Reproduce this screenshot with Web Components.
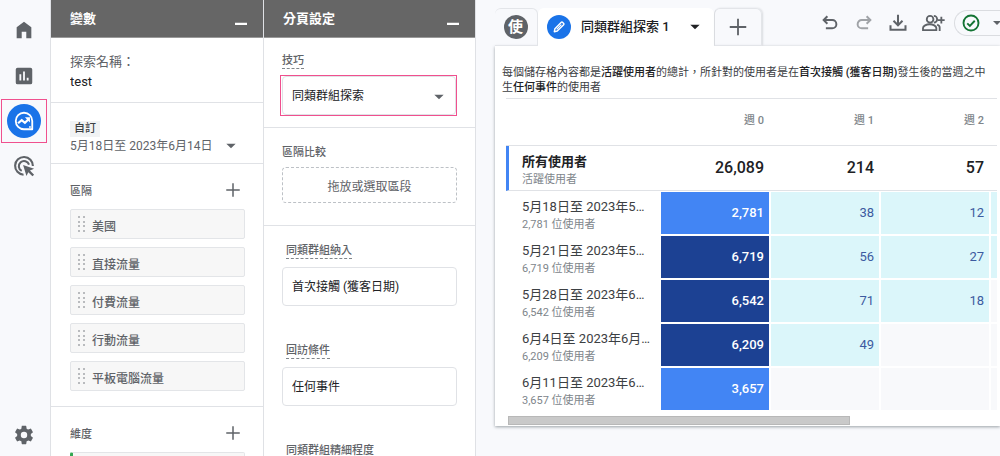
<!DOCTYPE html>
<html lang="zh-Hant">
<head>
<meta charset="utf-8">
<meta name="viewport" content="width=device-width, initial-scale=1">
<title>同類群組探索</title>
<style>
  body { margin: 0; font-family: Roboto, "Noto Sans CJK TC", sans-serif; font-size: 12px; color: #202124; background: #f8f9fc; }
</style>
</head>
<body>
<exploration-app></exploration-app>

<script>
const BASE = `
  * { box-sizing: border-box; }
  :host { display: block; }
  :host([hidden]) { display: none; }
  svg { display: block; fill: currentColor; }
  button, select, input { font: inherit; color: inherit; margin: 0; padding: 0; border: 0; background: none; }
  button, select { cursor: pointer; }
`;

function define(name, render) {
  customElements.define(name, class extends HTMLElement {
    connectedCallback() {
      if (this.shadowRoot) return;
      const template = document.createElement('template');
      template.innerHTML = render(this);
      this.attachShadow({ mode: 'open' }).append(template.content.cloneNode(true));
    }
  });
}

/* Icons, each on a 24 x 24 grid */
const ICONS = {
  home: '<path d="M4 21V9l8-6 8 6v12h-5.500v-7h-5v7z"/>',
  chart: '<path fill-rule="evenodd" d="M5 3h14a2 2 0 0 1 2 2v14a2 2 0 0 1-2 2H5a2 2 0 0 1-2-2V5a2 2 0 0 1 2-2zM7 10v7h2v-7zM11 7v10h2V7zM15 14v3h2v-3z"/>',
  explore: '<path fill="none" stroke="currentColor" stroke-width="2" stroke-linejoin="round" d="M12 3a9 9 0 1 0 0 18h9v-9a9 9 0 0 0-9-9z"/><path fill="none" stroke="currentColor" stroke-width="2.400" d="M5.500 14.500l4-3.500 3.500 3 4-4"/><path d="M13 8h5.500v5.500z"/><circle cx="18.500" cy="18.500" r="1"/>',
  target: '<g fill="none" stroke="currentColor" stroke-width="2.300"><path d="M11.500 21.500A9.700 9.700 0 1 1 21.700 12"/><path d="M9.500 17.300A5.700 5.700 0 1 1 17.500 10.500"/></g><path d="M11 11l12 4-4.500 2 4.500 4.500-1.800 1.800-4.500-4.500-2 4.200z"/>',
  gear: '<path d="M19.430 12.980c.04-.32.07-.64.07-.98s-.03-.66-.07-.98l2.110-1.650c.19-.15.24-.42.12-.64l-2-3.460c-.12-.22-.39-.3-.61-.22l-2.490 1c-.52-.4-1.080-.73-1.690-.98l-.38-2.650A.49.49 0 0 0 14 2h-4c-.25 0-.46.18-.49.42l-.38 2.650c-.61.25-1.170.59-1.690.98l-2.490-1c-.23-.09-.49 0-.61.22l-2 3.460c-.13.22-.07.49.12.64l2.110 1.650c-.04.32-.07.65-.07.98s.03.66.07.98l-2.110 1.650c-.19.15-.24.42-.12.64l2 3.460c.12.22.39.3.61.22l2.490-1c.52.4 1.080.73 1.690.98l.38 2.650c.03.24.24.42.49.42h4c.25 0 .46-.18.49-.42l.38-2.650c.61-.25 1.170-.59 1.690-.98l2.490 1c.23.09.49 0 .61-.22l2-3.460c.12-.22.07-.49-.12-.64l-2.110-1.650zM12 15.500A3.500 3.500 0 1 1 12 8.500a3.500 3.500 0 0 1 0 7z"/>',
  plus: '<path d="M11 3h2v8h8v2h-8v8h-2v-8H3v-2h8z"/>',
  minus: '<path d="M4 17h16v3H4z"/>',
  caret: '<path d="M4 8h16l-8 8z"/>',
  undo: '<path fill="none" stroke="currentColor" stroke-width="2.600" d="M8.500 3L3.500 8l5 5M3.500 8H15a5.500 5.500 0 0 1 0 11H6.500"/>',
  redo: '<path fill="none" stroke="currentColor" stroke-width="2.600" d="M15.500 3l5 5-5 5M20.500 8H9a5.500 5.500 0 0 0 0 11h8.500"/>',
  download: '<path fill="none" stroke="currentColor" stroke-width="2.700" d="M12 1v14M6 9l6 6 6-6M2 15v6h20v-6"/>',
  share: '<g fill="none" stroke="currentColor" stroke-width="2.200"><circle cx="8.500" cy="7.500" r="4"/><path d="M0 20.500V18c0-2.500 4-4.500 8-4.500s8 2 8 4.500v2.500zM13 3.500a4 4 0 0 1 0 8M17 14c2 .700 3 2 3 3.500V21.500M22 4.500v8M18 8.500h8"/></g>',
  check: '<g fill="none" stroke="currentColor" stroke-width="2.500"><circle cx="12" cy="12" r="10"/><path d="M7 12.500l3.500 3.500L17 9"/></g>',
  pencil: '<path fill="none" stroke="currentColor" stroke-width="2.500" stroke-linejoin="round" d="M4 20l1-5L16 4q1-1 2 0l2 2q1 1 0 2L9 19z"/><path fill="none" stroke="currentColor" stroke-width="2" d="M8 16l8-8"/>'
};
define('ui-icon', el => `<style>${BASE}
  svg { width: var(--size, 18px); height: var(--size, 18px); overflow: visible; }
</style><svg viewBox="0 0 24 24" aria-hidden="true">${ICONS[el.getAttribute('name')]}</svg>`);

define('nav-rail', () => `<style>${BASE}
  :host { color: #5f6368; }
  nav { height: 100%; display: flex; flex-direction: column; align-items: center; padding: 7px 2px 0 0; }
  a { display: grid; place-items: center; width: 46px; height: 46px; color: inherit; --size: 22px; }
  a.current { height: 44px; border: 1px solid #f0508e; }
  a.current span { display: grid; place-items: center; width: 34px; height: 34px; border-radius: 50%; background: #1a73e8; color: #fff; }
  a.settings { margin-top: auto; height: 42px; }
</style>
<nav aria-label="主選單">
  <a href="#home" aria-label="首頁"><ui-icon name="home"></ui-icon></a>
  <a href="#reports" aria-label="報表"><ui-icon name="chart"></ui-icon></a>
  <a href="#explore" class="current" aria-label="探索"><span><ui-icon name="explore"></ui-icon></span></a>
  <a href="#advertising" aria-label="廣告"><ui-icon name="target"></ui-icon></a>
  <a href="#admin" class="settings" aria-label="管理"><ui-icon name="gear"></ui-icon></a>
</nav>`);

define('side-panel', el => `<style>${BASE}
  :host { background: #fff; border-left: 1px solid #dfe1e5; min-width: 0; }
  header { display: flex; justify-content: space-between; align-items: center; height: 38px; padding: 0 13px 0 19px; background: #666; border-bottom: 1px solid #999; color: #fff; }
  h2 { margin: 0; font-size: 13px; line-height: 20px; font-weight: 700; }
</style>
<header><h2>${el.getAttribute('heading')}</h2><button aria-label="最小化"><ui-icon name="minus"></ui-icon></button></header>
<slot></slot>`);

define('panel-section', () => `<style>${BASE}
  :host { padding: 14px 18px 10px 19px; border-bottom: 1px solid #e0e2e6; }
</style><slot></slot>`);

define('name-field', () => `<style>${BASE}
  label { display: block; font-size: 13px; line-height: 20px; color: #5f6368; }
  input { display: block; width: 100%; height: 20px; font-size: 13px; line-height: 20px; }
</style><label for="name">探索名稱：</label><input id="name" value="test">`);

define('date-range', () => `<style>${BASE}
  :host { padding-top: 4px; }
  button { display: block; width: 100%; text-align: left; color: #5f6368; }
  .chip { display: inline-block; padding: 0 4px; background: #f1f3f4; color: #3c4043; font-size: 11px; line-height: 16px; font-weight: 500; }
  .range { display: flex; gap: 12px; align-items: center; line-height: 18px; --size: 14px; white-space: nowrap; }
</style><button><span class="chip">自訂</span><span class="range">5月18日至 2023年6月14日<ui-icon name="caret"></ui-icon></span></button>`);

define('item-group', el => `<style>${BASE}
  header { display: flex; justify-content: space-between; align-items: center; height: 24px; padding-right: 3px; color: #5f6368; }
  h3 { margin: 0; padding-top: 3px; font-size: 11px; line-height: 16px; font-weight: 500; }
  .items { display: grid; gap: 8px; padding-top: 7px; }
</style>
<header><h3>${el.getAttribute('heading')}</h3><button aria-label="新增${el.getAttribute('heading')}"><ui-icon name="plus"></ui-icon></button></header>
<div class="items"><slot></slot></div>`);

define('drag-item', () => `<style>${BASE}
  :host { display: flex; align-items: center; gap: 7px; height: 30px; padding: 6px 7px 0; border: 1px solid #e3e5e8; border-radius: 2px; background: #f7f7f7; color: #5f6368; font-weight: 500; line-height: 18px; }
  :host([kind="dimension"]) { border-left: 3px solid #34a853; }
  svg { width: 7px; height: 16px; color: #b9bbbe; margin-bottom: 6px; }
</style>
<svg viewBox="0 0 7 16" aria-hidden="true"><path d="M0 0h2v2H0zM5 0h2v2H5zM0 5h2v2H0zM5 5h2v2H5zM0 9h2v2H0zM5 9h2v2H5zM0 14h2v2H0zM5 14h2v2H5z"/></svg><span><slot></slot></span>`);

define('select-field', el => `<style>${BASE}
  label { display: inline-block; height: 17px; font-size: 11px; line-height: 18px; color: #5f6368; font-weight: 500; border-bottom: 1px dashed #80868b; vertical-align: top; }
  :host([indent]) label { margin-left: 4px; }
  .box { position: relative; display: block; margin-top: 8px; }
  select { display: block; appearance: none; width: 100%; height: 39px; padding: 0 9px; border: 1px solid #e0e2e6; border-radius: 4px; background: #fff; }
  ui-icon { position: absolute; right: 10px; top: 14px; --size: 14px; color: #5f6368; pointer-events: none; }
  :host([marked]) .box { margin: 6px 0 0 -2px; border: 1px solid #f0508e; padding-left: 1px; }
</style>
<label for="field">${el.getAttribute('label')}</label>
<div class="box"><select id="field"><option>${el.getAttribute('value')}</option></select>${el.hasAttribute('marked') ? '<ui-icon name="caret"></ui-icon>' : ''}</div>`);

define('drop-zone', el => `<style>${BASE}
  h3 { margin: 0 0 6px; font-size: 11px; line-height: 17px; font-weight: 500; color: #5f6368; }
  button { display: block; width: 100%; height: 36px; border: 1px dashed #bdc1c6; border-radius: 4px; color: #5f6368; }
</style><h3>${el.getAttribute('heading')}</h3><button><slot></slot></button>`);

define('tab-bar', () => `<style>${BASE}
  :host { display: flex; align-items: flex-end; justify-content: space-between; height: 46px; overflow: hidden; }
  .tabs, .tools { display: flex; }
  .tabs button { display: flex; align-items: center; justify-content: center; height: 38px; border: 1px solid #e3e5e9; border-left: 0; border-radius: 6px 6px 0 0; color: #5f6368; }
  .badge { display: grid; place-items: center; width: 24px; height: 24px; border-radius: 50%; background: #5f6368; color: #fff; font-size: 15px; line-height: 24px; font-weight: 700; }
  .tabs .first { width: 43px; padding-right: 1px; }
  .tabs .active { width: 176px; justify-content: flex-start; gap: 10px; padding-left: 9px; background: #fff; border-color: #fff; color: #202124; font-size: 13px; line-height: 18px; font-weight: 500; }
  .active .badge { background: #1a73e8; --size: 14px; }
  .active > ui-icon { --size: 14px; margin-left: 8px; }
  .tabs .add { width: 48px; --size: 22px; border-left: 1px solid #dadce0; box-shadow: 1px 0 2px #dadce0; }
  .tools { align-self: flex-start; align-items: center; gap: 16px; height: 46px; color: #5f6368; }
  .tools .off { color: #a0a3a7; }
  .tools .share { margin-right: -5px; --size: 20px; }
  .status { display: flex; align-items: center; gap: 11px; width: 60px; height: 26px; margin-right: -14px; padding-left: 7px; border: 1px solid #dadce0; border-right: 0; border-radius: 13px 0 0 13px; color: #137333; }
  .status ui-icon + ui-icon { --size: 12px; color: #5f6368; }
</style>
<div class="tabs">
  <button class="first" aria-label="使用者"><span class="badge">使</span></button>
  <button class="active"><span class="badge"><ui-icon name="pencil"></ui-icon></span><span>同類群組探索 1</span><ui-icon name="caret"></ui-icon></button>
  <button class="add" aria-label="新增分頁"><ui-icon name="plus"></ui-icon></button>
</div>
<div class="tools">
  <button aria-label="復原"><ui-icon name="undo"></ui-icon></button>
  <button class="off" aria-label="重做"><ui-icon name="redo"></ui-icon></button>
  <button aria-label="下載"><ui-icon name="download"></ui-icon></button>
  <button class="share" aria-label="共用"><ui-icon name="share"></ui-icon></button>
  <button class="status" aria-label="資料狀態"><ui-icon name="check"></ui-icon><ui-icon name="caret"></ui-icon></button>
</div>`);

/* Each cohort row: label, size, then the cells as [shade, value] */
const COHORTS = [
  ['5月18日至 2023年5…', '2,781', [['mid', '2,781'], ['low', '38'], ['low', '12'], ['low', '']]],
  ['5月21日至 2023年5…', '6,719', [['high', '6,719'], ['low', '56'], ['low', '27'], ['low', '']]],
  ['5月28日至 2023年6…', '6,542', [['high', '6,542'], ['low', '71'], ['low', '18'], ['none', '']]],
  ['6月4日至 2023年6月…', '6,209', [['high', '6,209'], ['low', '49'], ['none', ''], ['none', '']]],
  ['6月11日至 2023年6…', '3,657', [['mid', '3,657'], ['none', ''], ['none', ''], ['none', '']]]
];
define('cohort-table', () => `<style>${BASE}
  :host { overflow: hidden; border-top: 1px solid #e0e2e6; }
  table { width: 594px; min-width: 100%; table-layout: fixed; border-collapse: separate; border-spacing: 0; }
  col { width: 110px; } col:first-child { width: 154px; }
  th, td { padding: 0; text-align: right; font-weight: 500; }
  thead th, thead td { height: 47px; padding: 0 6px 2px 0; border-bottom: 1px solid #e0e2e6; font-size: 11px; line-height: 16px; color: #80868b; }
  .total th, .total td { height: 45px; border-bottom: 1px solid #e0e2e6; }
  .total td { padding-right: 6px; font-size: 16px; line-height: 20px; }
  tbody th { text-align: left; padding: 7px 0 0 16px; vertical-align: top; font-size: 13px; line-height: 18px; font-weight: 400; color: #3c4043; white-space: nowrap; }
  .total th { border-left: 3px solid #4285f4; padding-left: 13px; font-weight: 700; color: #202124; }
  small { display: block; font-size: 11px; line-height: 17px; font-weight: 400; color: #80868b; }
  .cohort th, .cohort td { height: 44px; }
  .cohort td { padding-right: 5px; border: 1px solid #fff; font-size: 13px; line-height: 18px; font-weight: 400; color: #3c5aa0; }
  .cohort .mid, .cohort .high { color: #fff; font-weight: 500; }
  .mid { background: #4285f4; } .high { background: #1c4193; } .low { background: #dbf6fa; } .none { background: #f8f9fb; }
</style>
<table>
  <colgroup><col><col><col><col><col></colgroup>
  <thead><tr><td></td><th scope="col">週 0</th><th scope="col">週 1</th><th scope="col">週 2</th><td></td></tr></thead>
  <tbody>
    <tr class="total"><th scope="row">所有使用者<small>活躍使用者</small></th><td>26,089</td><td>214</td><td>57</td><td></td></tr>
    ${COHORTS.map(([label, size, cells]) => `<tr class="cohort"><th scope="row">${label}<small>${size} 位使用者</small></th>${cells.map(([shade, value]) => `<td class="${shade}">${value}</td>`).join('')}</tr>`).join('')}
  </tbody>
</table>`);

define('report-card', () => `<style>${BASE}
  :host { background: #fff; padding: 19px 3px 0 7px; box-shadow: 0 1px 3px #9aa0a6; }
  p { margin: 0 0 3px; font-size: 11px; line-height: 15px; color: #3c4043; white-space: nowrap; overflow: hidden; }
  b { font-weight: 500; color: #202124; }
  cohort-table { margin-left: 4px; }
  .track { height: 10px; margin: 5px 0 0 6px; }
  .thumb { width: 70%; height: 9px; background: #c9c9c9; border: 1px solid #b8b8b8; }
</style>
<p>每個儲存格內容都是<b>活躍使用者</b>的總計，所針對的使用者是在<b>首次接觸 (獲客日期)</b>發生後的當週之中<br>生<b>任何事件</b>的使用者</p>
<cohort-table></cohort-table>
<div class="track"><div class="thumb"></div></div>`);

define('exploration-app', () => `<style>${BASE}
  :host { display: grid; grid-template-columns: 50px 213px 212px minmax(0, 1fr); height: 100vh; overflow: hidden; }
  side-panel { overflow: hidden; }
  main { border-left: 1px solid #dfe1e5; padding-left: 19px; overflow: hidden; }
  .dates { padding-bottom: 8px; }
  .segments { padding-bottom: 15px; }
  .technique { padding-bottom: 11px; }
  .compare { padding: 16px 18px 22px; }
  .rules { display: grid; gap: 36px; padding-top: 16px; }
  .technique, .rules { padding-left: 18px; }
</style>
<nav-rail></nav-rail>
<side-panel heading="變數">
  <panel-section><name-field></name-field></panel-section>
  <panel-section class="dates"><date-range></date-range></panel-section>
  <panel-section class="segments"><item-group heading="區隔">
    <drag-item>美國</drag-item><drag-item>直接流量</drag-item><drag-item>付費流量</drag-item><drag-item>行動流量</drag-item><drag-item>平板電腦流量</drag-item>
  </item-group></panel-section>
  <panel-section><item-group heading="維度"><drag-item kind="dimension"></drag-item></item-group></panel-section>
</side-panel>
<side-panel heading="分頁設定">
  <panel-section class="technique"><select-field marked label="技巧" value="同類群組探索"></select-field></panel-section>
  <panel-section class="compare"><drop-zone heading="區隔比較">拖放或選取區段</drop-zone></panel-section>
  <panel-section class="rules">
    <select-field indent label="同類群組納入" value="首次接觸 (獲客日期)"></select-field>
    <select-field indent label="回訪條件" value="任何事件"></select-field>
    <select-field indent label="同類群組精細程度" value=""></select-field>
  </panel-section>
</side-panel>
<main><tab-bar></tab-bar><report-card></report-card></main>`);
</script>
</body>
</html>
